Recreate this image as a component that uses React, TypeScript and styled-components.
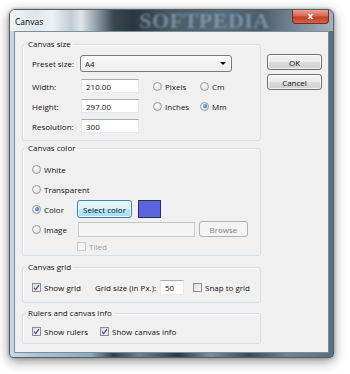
import React from "react";
import styled, { createGlobalStyle } from "styled-components";

const GlobalStyle = createGlobalStyle`
  html, body {
    margin: 0;
    padding: 0;
    background: #ffffff;
  }
  body {
    font-family: "Open Sans", "Noto Sans", sans-serif;
    font-size: 8px;
    color: #111;
  }
`;

const Page = styled.div`
  width: 350px;
  height: 374px;
  padding: 9px 0 0 9px;
  box-sizing: border-box;
  overflow: hidden;
`;

const Window = styled.div`
  width: 325px;
  height: 349px;
  box-sizing: border-box;
  display: flex;
  flex-direction: column;
  border: 1px solid #50606c;
  border-radius: 6px 6px 4px 4px;
  background: linear-gradient(
    to right,
    #c9d7e2 0%,
    #a9c1d3 10%,
    #8fa9bd 25%,
    #33414b 32%,
    #6d8292 40%,
    #2c3a44 52%,
    #7a8e9d 62%,
    #3b4a55 74%,
    #6e8494 86%,
    #5a6f7e 100%
  );
  box-shadow: 0 3px 12px rgba(0, 0, 0, 0.45), 0 0 3px rgba(0, 0, 0, 0.3);
`;

const TitleBar = styled.div`
  height: 21px;
  display: flex;
  align-items: flex-start;
  border-radius: 5px 5px 0 0;
  background: linear-gradient(
    to right,
    #f1f4f6 0%,
    #dfe6eb 8%,
    #eef2f5 13%,
    #c2ccd4 19%,
    #e0e6eb 22%,
    #8d9aa5 27%,
    #3b4750 32%,
    #2b363e 38%,
    #4a5a66 50%,
    #566a79 65%,
    #4b5c69 78%,
    #768896 88%,
    #a3b2bd 100%
  );
`;

const Title = styled.span`
  margin: 6px 0 0 5px;
  font-size: 8.5px;
  line-height: 11px;
  color: #000;
  text-shadow: 0 0 6px #fff, 0 0 3px #fff;
`;

const Watermark = styled.span`
  margin: 1px 0 0 96px;
  font-family: "Liberation Serif", serif;
  font-weight: bold;
  font-size: 22px;
  letter-spacing: 0.5px;
  line-height: 20px;
  white-space: nowrap;
  color: rgba(150, 180, 205, 0.6);
  filter: blur(1px);
`;

const CloseButton = styled.span`
  display: flex;
  align-items: center;
  justify-content: center;
  flex: 0 0 37px;
  height: 14px;
  margin-left: auto;
  margin-right: 4px;
  box-sizing: border-box;
  border: 1px solid #7a2c20;
  border-top-width: 0;
  border-radius: 0 0 4px 4px;
  background-color: rgb(208, 80, 58);
  background-image: linear-gradient(rgb(236, 160, 142), rgb(214, 104, 84) 45%, rgb(196, 60, 38) 55%, rgb(214, 98, 76));
  color: #ffffff;
  font-family: "DejaVu Sans", sans-serif;
  font-weight: bold;
  font-size: 9px;
  line-height: 9px;
`;

const Client = styled.div`
  flex: 1;
  margin: 0 4px 4px 4px;
  border: 1px solid #7d8e9b;
  background: #f0f0f0;
  display: flex;
  padding: 6px 0 0 7px;
`;

const Groups = styled.div`
  width: 239px;
  display: flex;
  flex-direction: column;
`;

const Group = styled.fieldset<{ $top: number; $pt: number; $pb: number }>`
  margin: ${(p) => p.$top}px 0 0;
  padding: ${(p) => p.$pt}px 6px ${(p) => p.$pb}px 9px;
  border: 1px solid #d5dfe5;
  border-radius: 3px;
  min-width: 0;
  box-shadow: inset 1px 1px 0 #fbfbfb;
`;

const Legend = styled.legend`
  padding: 0 2px;
  margin-left: -6px;
  line-height: 12px;
  font-size: 8px;
`;

const SizeRow = styled.div<{ $h: number; $mt?: number }>`
  height: ${(p) => p.$h}px;
  margin-top: ${(p) => p.$mt ?? 0}px;
  display: grid;
  grid-template-columns: 48px 73px 47px auto;
  align-items: center;
`;

const ColorRow = styled.div<{ $h: number }>`
  height: ${(p) => p.$h}px;
  display: grid;
  grid-template-columns: 45px auto;
  align-items: center;
`;

const GridRow = styled.div`
  height: 20px;
  display: grid;
  grid-template-columns: 63px 64px 34px auto;
  align-items: center;
`;

const RulersRow = styled.div`
  height: 20px;
  display: grid;
  grid-template-columns: 68px auto;
  align-items: center;
`;

const Label = styled.span<{ $muted?: boolean }>`
  white-space: nowrap;
  color: ${(p) => (p.$muted ? "#a0a0a0" : "#111")};
`;

const Inline = styled.div`
  display: flex;
  align-items: center;
`;

const Combo = styled.div`
  grid-column: 2 / -1;
  width: 152px;
  height: 17px;
  box-sizing: border-box;
  display: flex;
  align-items: center;
  justify-content: space-between;
  padding: 0 5px 0 4px;
  border: 1px solid #7a7a7a;
  border-radius: 3px;
  background: linear-gradient(#fbfbfb, #ececec);
`;

const Arrow = styled.span`
  width: 0;
  height: 0;
  border-left: 3px solid transparent;
  border-right: 3px solid transparent;
  border-top: 3px solid #000;
`;

const Field = styled.div<{ $w: number; $h?: number; $disabled?: boolean }>`
  width: ${(p) => p.$w}px;
  height: ${(p) => p.$h ?? 14}px;
  margin-left: 1px;
  box-sizing: border-box;
  display: flex;
  align-items: center;
  padding-left: 4px;
  background: ${(p) => (p.$disabled ? "#f4f4f4" : "#fff")};
  border: 1px solid ${(p) => (p.$disabled ? "#c9cbcd" : "#e3e9ef")};
  border-top-color: ${(p) => (p.$disabled ? "#c2c4c6" : "#abadb3")};
`;

const Option = styled.label<{ $span?: boolean }>`
  display: flex;
  align-items: center;
  gap: 3px;
  white-space: nowrap;
  grid-column: ${(p) => (p.$span ? "1 / -1" : "auto")};
`;

const RadioDot = styled.span<{ $on?: boolean }>`
  position: relative;
  width: 9px;
  height: 9px;
  box-sizing: border-box;
  border-radius: 50%;
  border: 1px solid #939ca4;
  background: radial-gradient(circle at 40% 35%, #ffffff 0%, #e4e6e8 60%, #cfd3d6 100%);
  &::after {
    content: "";
    display: ${(p) => (p.$on ? "block" : "none")};
    position: absolute;
    left: 1.5px;
    top: 1.5px;
    width: 4px;
    height: 4px;
    border-radius: 50%;
    background: radial-gradient(circle at 35% 35%, #9cc8f0 0%, #2f6fc0 60%, #1c4b8e 100%);
  }
`;

const Box = styled.span<{ $disabled?: boolean }>`
  width: 9px;
  height: 9px;
  box-sizing: border-box;
  display: flex;
  align-items: center;
  justify-content: center;
  border: 1px solid ${(p) => (p.$disabled ? "#c8cacc" : "#8e8f8f")};
  background: ${(p) =>
    p.$disabled ? "#f4f4f4" : "linear-gradient(135deg, #d8dde2 0%, #f4f6f8 100%)"};
`;

const Button = styled.div<{ $w: number; $h?: number; $hot?: boolean; $disabled?: boolean }>`
  width: ${(p) => p.$w}px;
  height: ${(p) => p.$h ?? 16}px;
  box-sizing: border-box;
  display: flex;
  align-items: center;
  justify-content: center;
  border-radius: 3px;
  border: 1px solid
    ${(p) => (p.$hot ? "#3c7fb1" : p.$disabled ? "#adb2b5" : "#707070")};
  color: ${(p) => (p.$disabled ? "#838383" : "#111")};
  background: ${(p) =>
    p.$hot
      ? "linear-gradient(#eaf6fd 0%, #d9f0fc 50%, #bee6fd 50%, #a7d9f5 100%)"
      : p.$disabled
      ? "#f4f4f4"
      : "linear-gradient(#f2f2f2 0%, #ebebeb 50%, #dddddd 50%, #cfcfcf 100%)"};
  box-shadow: ${(p) => (p.$disabled ? "none" : "inset 0 0 0 1px rgba(255,255,255,0.7)")};
`;

const Swatch = styled.div`
  width: 23px;
  height: 18px;
  margin-left: 6px;
  box-sizing: border-box;
  border: 1px solid #2a2f4a;
  background: #5b64df;
`;

const ButtonColumn = styled.div`
  margin-left: 6px;
  padding-top: 16px;
  display: flex;
  flex-direction: column;
  gap: 4px;
`;

const Spacer = styled.span<{ $w: number }>`
  display: inline-block;
  width: ${(p) => p.$w}px;
`;

function Radio({ label, on, span }: { label: string; on?: boolean; span?: boolean }) {
  return (
    <Option $span={span}>
      <RadioDot $on={on} />
      <Label>{label}</Label>
    </Option>
  );
}

function Check({ label, on, disabled }: { label: string; on?: boolean; disabled?: boolean }) {
  return (
    <Option>
      <Box $disabled={disabled}>
        {on && (
          <svg width="7" height="7" viewBox="0 0 7 7">
            <path d="M1 3.6 L2.7 5.6 L6 1.2" fill="none" stroke="#3a4f96" strokeWidth="1.2" />
          </svg>
        )}
      </Box>
      <Label $muted={disabled}>{label}</Label>
    </Option>
  );
}

export default function App() {
  return (
    <Page>
      <GlobalStyle />
      <Window>
        <TitleBar>
          <Title>Canvas</Title>
          <Watermark>SOFTPEDIA</Watermark>
          <CloseButton>x</CloseButton>
        </TitleBar>
        <Client>
          <Groups>
            <Group $top={0} $pt={5} $pb={4}>
              <Legend>Canvas size</Legend>
              <SizeRow $h={17}>
                <Label>Preset size:</Label>
                <Combo>
                  <span>A4</span>
                  <Arrow />
                </Combo>
              </SizeRow>
              <SizeRow $h={20} $mt={4}>
                <Label>Width:</Label>
                <Field $w={58}>210.00</Field>
                <Radio label="Pixels" />
                <Radio label="Cm" />
              </SizeRow>
              <SizeRow $h={20}>
                <Label>Height:</Label>
                <Field $w={58}>297.00</Field>
                <Radio label="Inches" />
                <Radio label="Mm" on />
              </SizeRow>
              <SizeRow $h={20}>
                <Label>Resolution:</Label>
                <Field $w={58}>300</Field>
              </SizeRow>
            </Group>

            <Group $top={1} $pt={5} $pb={2}>
              <Legend>Canvas color</Legend>
              <ColorRow $h={20}>
                <Radio label="White" span />
              </ColorRow>
              <ColorRow $h={20}>
                <Radio label="Transparent" span />
              </ColorRow>
              <ColorRow $h={20}>
                <Radio label="Color" on />
                <Inline>
                  <Button $w={55} $h={18} $hot>
                    Select color
                  </Button>
                  <Swatch />
                </Inline>
              </ColorRow>
              <ColorRow $h={20}>
                <Radio label="Image" />
                <Inline>
                  <Field $w={117} $h={15} $disabled />
                  <Spacer $w={4} />
                  <Button $w={49} $disabled>
                    Browse
                  </Button>
                </Inline>
              </ColorRow>
              <ColorRow $h={14}>
                <span />
                <Check label="Tiled" disabled />
              </ColorRow>
            </Group>

            <Group $top={5} $pt={4} $pb={5}>
              <Legend>Canvas grid</Legend>
              <GridRow>
                <Check label="Show grid" on />
                <Label>Grid size (in Px.):</Label>
                <Field $w={24} $h={15}>50</Field>
                <Check label="Snap to grid" />
              </GridRow>
            </Group>

            <Group $top={4} $pt={2} $pb={2}>
              <Legend>Rulers and canvas info</Legend>
              <RulersRow>
                <Check label="Show rulers" on />
                <Check label="Show canvas info" on />
              </RulersRow>
            </Group>
          </Groups>

          <ButtonColumn>
            <Button $w={55}>OK</Button>
            <Button $w={55}>Cancel</Button>
          </ButtonColumn>
        </Client>
      </Window>
    </Page>
  );
}
